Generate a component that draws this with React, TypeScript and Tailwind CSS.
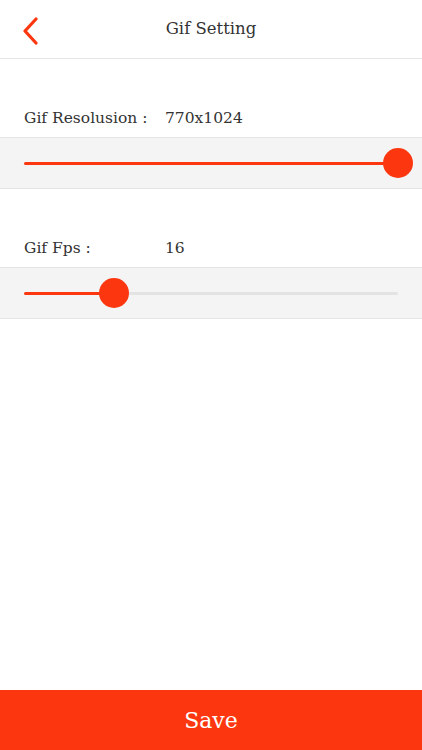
const ACCENT = "#fc3710";

function Slider({ pct }: { pct: number }) {
  return (
    <div className="relative h-[3px] w-full rounded-full bg-[#e3e3e3]">
      <div className="absolute left-0 top-0 h-full rounded-full bg-[#fc3710]" style={{ width: `${pct}%` }} />
      <div
        className="absolute top-1/2 h-[30px] w-[30px] -translate-x-1/2 -translate-y-1/2 rounded-full bg-[#fc3710]"
        style={{ left: `${pct}%` }}
      />
    </div>
  );
}

function Setting({ label, value, pct }: { label: string; value: string; pct: number }) {
  return (
    <div>
      <div className="flex h-[78px] items-end pb-[7px] pl-6 text-[15.5px] text-[#333]">
        <span className="w-[141px]">{label}</span>
        <span>{value}</span>
      </div>
      <div className="flex h-[52px] items-center border-y border-[#e4e4e4] bg-[#f4f4f4] pl-6 pr-6">
        <Slider pct={pct} />
      </div>
    </div>
  );
}

export default function App() {
  return (
    <div
      className="flex h-[750px] w-[422px] flex-col bg-white"
      style={{ fontFamily: '"DejaVu Serif", "Liberation Serif", serif' }}
    >
      <header className="relative flex h-[59px] items-center justify-center border-b border-[#e6e6e6]">
        <button className="absolute left-[17px] top-[13px] p-1">
          <svg width="18" height="28" viewBox="0 0 18 28" fill="none">
            <path d="M15 2 L4 14 L15 26" stroke={ACCENT} strokeWidth="3.2" strokeLinecap="round" strokeLinejoin="round" />
          </svg>
        </button>
        <h1 className="text-[16.5px] text-[#333]">Gif Setting</h1>
      </header>

      <Setting label="Gif Resolusion :" value="770x1024" pct={100} />
      <Setting label="Gif Fps :" value="16" pct={24} />

      <div className="flex-1" />

      <button className="flex h-[60px] w-full items-center justify-center bg-[#fc3710] text-[22px] text-white">
        Save
      </button>
    </div>
  );
}
